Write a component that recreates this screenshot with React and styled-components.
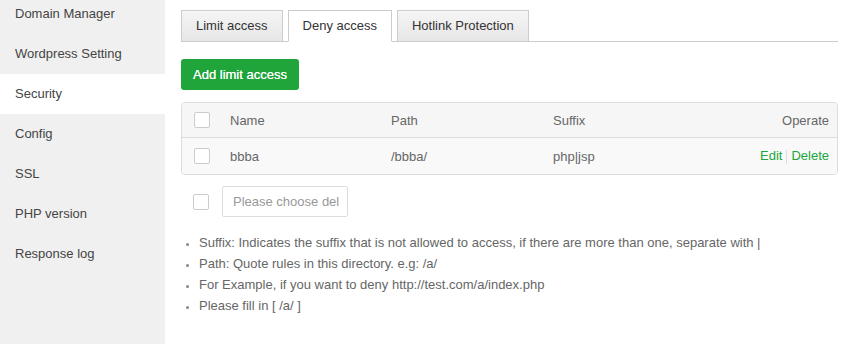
import React from 'react';
import styled, { createGlobalStyle } from 'styled-components';

const GlobalStyle = createGlobalStyle`
  html, body {
    margin: 0;
    padding: 0;
    background: #fff;
    font-family: "Liberation Sans", Arial, sans-serif;
    font-size: 13px;
    color: #666;
  }
`;

const Layout = styled.div`
  display: flex;
  width: 847px;
  height: 344px;
  overflow: hidden;
`;

const Sidebar = styled.ul`
  width: 165px;
  flex-shrink: 0;
  margin: 0;
  padding: 0;
  list-style: none;
  background: #f0f0f0;
  height: 100%;
`;

const SideList = styled.div`
  margin-top: -6px;
`;

const SideItem = styled.li`
  height: 40px;
  line-height: 40px;
  padding-left: 15px;
  color: #444;
  background: ${(p) => (p.active ? '#fff' : 'transparent')};
`;

const Main = styled.div`
  flex: 1;
  padding: 10px 9px 0 16px;
`;

const TabBar = styled.div`
  display: flex;
  gap: 5px;
  border-bottom: 1px solid #ccc;
  height: 31px;
`;

const Tab = styled.div`
  box-sizing: border-box;
  padding: 0 14px;
  line-height: 30px;
  color: #333;
  border: 1px solid #ccc;
  border-bottom: ${(p) => (p.active ? '1px solid #fff' : 'none')};
  background: ${(p) => (p.active ? '#fff' : 'linear-gradient(#f5f5f5, #e6e6e6)')};
  height: ${(p) => (p.active ? '32px' : '31px')};
`;

const PrimaryButton = styled.button`
  margin-top: 17px;
  height: 31px;
  padding: 0 12px;
  border: none;
  border-radius: 3px;
  background: #20a53a;
  color: #fff;
  font-family: inherit;
  font-size: 13px;
  font-weight: 400;
  text-shadow: 0 0 0.4px #fff;
`;

const Table = styled.div`
  margin-top: 12px;
  border: 1px solid #ddd;
  border-radius: 4px;
  overflow: hidden;
`;

const Row = styled.div`
  display: grid;
  grid-template-columns: 38px 161px 162px 1fr auto;
  align-items: center;
  height: ${(p) => (p.head ? '34px' : '36px')};
  background: ${(p) => (p.head ? '#f6f6f6' : '#f9f9fa')};
  border-top: ${(p) => (p.head ? 'none' : '1px solid #ddd')};
`;

const Cell = styled.div`
  padding: ${(p) => (p.right ? '0 8px 0 10px' : '0 10px')};
  color: #666;
  text-align: ${(p) => (p.right ? 'right' : 'left')};
`;

const CheckCell = styled.div`
  padding-left: 12px;
  display: flex;
  align-items: center;
`;

const Check = styled.span`
  display: inline-block;
  width: 14px;
  height: 14px;
  border: 1px solid #ccc;
  border-radius: 2px;
  background: #fff;
`;

const LinkText = styled.a`
  color: #20a53a;
  text-decoration: none;
`;

const Divider = styled.span`
  display: inline-block;
  width: 1px;
  height: 14px;
  background: #ddd;
  margin: 0 4px;
  vertical-align: middle;
`;

const BatchBar = styled.div`
  display: flex;
  align-items: center;
  gap: 13px;
  margin-top: 11px;
  padding-left: 12px;
`;

const BatchSelect = styled.div`
  height: 31px;
  box-sizing: border-box;
  width: 126px;
  border: 1px solid #ddd;
  border-radius: 2px;
  padding-left: 10px;
  line-height: 29px;
  color: #999;
`;

const Tips = styled.ul`
  margin: 15px 0 0;
  padding-left: 18px;
  color: #666;
  line-height: 21px;
  font-size: 13px;
  li::marker {
    color: #888;
    font-size: 11px;
  }
`;

const menu = ['Domain Manager', 'Wordpress Setting', 'Security', 'Config', 'SSL', 'PHP version', 'Response log'];
const tabs = ['Limit access', 'Deny access', 'Hotlink Protection'];

export default function App() {
  return (
    <>
      <GlobalStyle />
      <Layout>
        <Sidebar>
          <SideList>
            {menu.map((m) => (
              <SideItem key={m} active={m === 'Security'}>{m}</SideItem>
            ))}
          </SideList>
        </Sidebar>
        <Main>
          <TabBar>
            {tabs.map((t) => (
              <Tab key={t} active={t === 'Deny access'}>{t}</Tab>
            ))}
          </TabBar>
          <PrimaryButton>Add limit access</PrimaryButton>
          <Table>
            <Row head>
              <CheckCell><Check /></CheckCell>
              <Cell>Name</Cell>
              <Cell>Path</Cell>
              <Cell>Suffix</Cell>
              <Cell right>Operate</Cell>
            </Row>
            <Row>
              <CheckCell><Check /></CheckCell>
              <Cell>bbba</Cell>
              <Cell>/bbba/</Cell>
              <Cell>php|jsp</Cell>
              <Cell right>
                <LinkText>Edit</LinkText>
                <Divider />
                <LinkText>Delete</LinkText>
              </Cell>
            </Row>
          </Table>
          <BatchBar>
            <Check />
            <BatchSelect>Please choose del</BatchSelect>
          </BatchBar>
          <Tips>
            <li>Suffix: Indicates the suffix that is not allowed to access, if there are more than one, separate with |</li>
            <li>Path: Quote rules in this directory. e.g: /a/</li>
            <li>For Example, if you want to deny http://test.com/a/index.php</li>
            <li>Please fill in [ /a/ ]</li>
          </Tips>
        </Main>
      </Layout>
    </>
  );
}
